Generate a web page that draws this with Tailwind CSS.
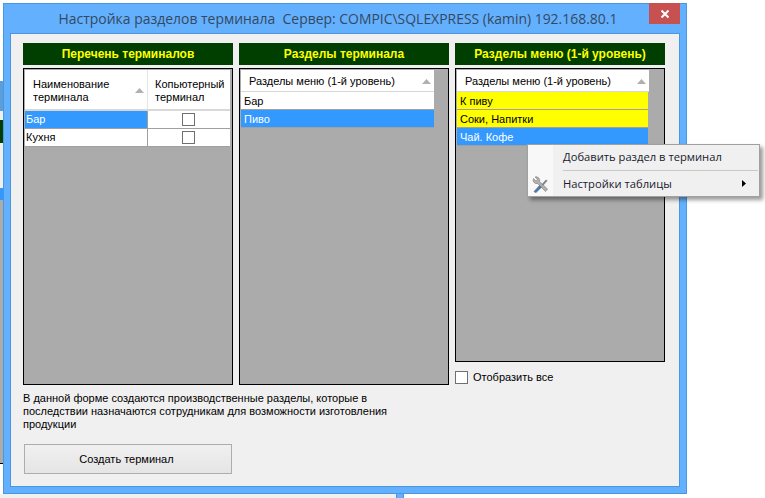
<!DOCTYPE html>
<html lang="ru">

<head>
  <meta charset="UTF-8">
  <meta name="viewport" content="width=device-width, initial-scale=1.0">
  <title>Настройка разделов терминала</title>
  <script src="https://cdn.jsdelivr.net/npm/@tailwindcss/browser@4"></script>
</head>

<body class="relative w-[765px] h-[498px] overflow-hidden bg-white font-['Liberation_Sans',sans-serif] text-[11px] leading-[13px] text-black">

  <!-- what is visible of the desktop behind the window -->
  <div class="absolute left-0 top-0 w-[3px] h-[498px] flex flex-col">
    <div class="h-[81px] bg-white"></div>
    <div class="h-[30px] bg-[#5b9fd8]"></div>
    <div class="h-[9px] bg-[#f0f0f0]"></div>
    <div class="h-[23px] bg-[#003f00]"></div>
    <div class="h-[45px] bg-[#f0f0f0]"></div>
    <div class="h-[12px] bg-[#3399ff]"></div>
    <div class="h-[263px] bg-[#ababab]"></div>
    <div class="grow bg-white border-t border-black"></div>
  </div>
  <div class="absolute left-0 top-[494px] flex h-[4px] w-[765px]">
    <div class="w-[396px] bg-[#f0f0f0]"></div>
    <div class="w-[8px] bg-[#63b0ff] border-x border-[#4a96e0]"></div>
  </div>

  <!-- window -->
  <div class="absolute left-[3px] top-[3px] w-[684px] h-[491px] flex flex-col bg-[#63b0ff] border border-[#4a96e0]">
    <div class="relative h-[29px] shrink-0 flex items-center justify-center pr-[14px] text-[13.95px] text-[#34495e] font-['Open_Sans',sans-serif] whitespace-pre">
      <span>Настройка разделов терминала  Сервер: COMPIC\SQLEXPRESS (kamin) 192.168.80.1</span>
      <div class="absolute right-[6px] top-[-1px] w-[31px] h-[21px] bg-[#c75050] flex items-center justify-center">
        <svg width="10" height="10" viewBox="0 0 10 10"><path d="M1.5 1.5 8.5 8.5M8.5 1.5 1.5 8.5" stroke="#fff" stroke-width="2" /></svg>
      </div>
    </div>

    <div class="mx-[6px] mb-[6px] grow bg-[#f0f0f0] border border-[#4a96e0] pl-[12px] pt-[9px]">
      <div class="flex gap-[6px] items-start">

        <!-- terminals -->
        <div class="w-[210px]">
          <div class="h-[22px] bg-[#003f00] flex items-center justify-center font-bold text-[12px] text-[#ffff00]">Перечень терминалов</div>
          <div class="mt-[3px] h-[317px] bg-[#ababab] border border-black pt-[1px] pl-[1px]">
            <div class="w-[205px] flex h-[41px] bg-white border-b-2 border-[#d8d8d8]">
              <div class="w-[123px] flex items-center pt-[2px] pl-[8px] pr-[3px] justify-between border-r border-[#e5e5e5]">
                <span>Наименование<br>терминала</span>
                <svg width="9" height="5" viewBox="0 0 9 5"><path d="M0 5 4.5 0 9 5Z" fill="#b0b0b0" /></svg>
              </div>
              <div class="grow flex items-center pt-[2px] pl-[7px]"><span>Копьютерный<br>терминал</span></div>
            </div>
            <div class="w-[205px] flex h-[18px] bg-white border-b border-[#a0a0a0]">
              <div class="w-[123px] bg-[#3399ff] text-white pl-[1px] flex items-center border-r border-[#a0a0a0]">Бар</div>
              <div class="grow flex items-center justify-center pr-[2px]"><div class="w-[13px] h-[13px] border border-[#707070] bg-white"></div></div>
            </div>
            <div class="w-[205px] flex h-[18px] bg-white border-b border-[#a0a0a0]">
              <div class="w-[123px] pl-[1px] flex items-center border-r border-[#a0a0a0]">Кухня</div>
              <div class="grow flex items-center justify-center pr-[2px]"><div class="w-[13px] h-[13px] border border-[#707070] bg-white"></div></div>
            </div>
          </div>
        </div>

        <!-- terminal sections -->
        <div class="w-[210px]">
          <div class="h-[22px] bg-[#003f00] flex items-center justify-center font-bold text-[12px] text-[#ffff00]">Разделы терминала</div>
          <div class="mt-[3px] h-[317px] bg-[#ababab] border border-black pt-[1px] pl-[1px]">
            <div class="w-[193px] h-[22px] bg-white border-b border-[#d8d8d8] flex items-center justify-between pl-[8px] pr-[3px] pt-[1px]">
              <span>Разделы меню (1-й уровень)</span>
              <svg width="9" height="5" viewBox="0 0 9 5"><path d="M0 5 4.5 0 9 5Z" fill="#b0b0b0" /></svg>
            </div>
            <div class="w-[193px] h-[18px] bg-white border-b border-[#a0a0a0] flex items-center pl-[3px] pt-[1px]">Бар</div>
            <div class="w-[193px] h-[18px] bg-[#3399ff] text-white border-b border-[#a0a0a0] flex items-center pl-[3px] pt-[1px]">Пиво</div>
          </div>
        </div>

        <!-- menu sections -->
        <div class="w-[210px]">
          <div class="h-[22px] bg-[#003f00] flex items-center justify-center font-bold text-[12px] text-[#ffff00]">Разделы меню (1-й уровень)</div>
          <div class="mt-[3px] h-[294px] bg-[#ababab] border border-black pt-[1px] pl-[1px]">
            <div class="w-[192px] h-[22px] bg-white border-b border-[#d8d8d8] flex items-center justify-between pl-[8px] pr-[3px] pt-[1px]">
              <span>Разделы меню (1-й уровень)</span>
              <svg width="9" height="5" viewBox="0 0 9 5"><path d="M0 5 4.5 0 9 5Z" fill="#b0b0b0" /></svg>
            </div>
            <div class="w-[191px] h-[18px] bg-[#ffff00] border-b border-[#a0a0a0] flex items-center pl-[3px] pt-[1px]">К пиву</div>
            <div class="w-[191px] h-[18px] bg-[#ffff00] border-b border-[#a0a0a0] flex items-center pl-[3px] pt-[1px]">Соки, Напитки</div>
            <div class="w-[191px] h-[18px] bg-[#3399ff] text-white border-b border-[#a0a0a0] flex items-center pl-[3px] pt-[1px]">Чай. Кофе</div>
          </div>
          <label class="mt-[8px] flex items-center gap-[5px]">
            <span class="w-[13px] h-[13px] border border-[#707070] bg-white"></span>
            <span class="pt-[1px]">Отобразить все</span>
          </label>
        </div>
      </div>

      <p class="mt-[7px] w-[400px]">В данной форме создаются производственные разделы, которые в последствии назначаются сотрудникам для возможности изготовления продукции</p>

      <button class="mt-[13px] ml-[1px] block w-[208px] h-[30px] pr-[3px] border border-[#adadad] bg-gradient-to-b from-[#f0f0f0] to-[#e5e5e5]">Создать терминал</button>
    </div>
  </div>

  <!-- context menu -->
  <div class="absolute left-[527px] top-[144px] w-[233px] h-[53px] bg-[#f0f0f0] border border-[#a0a0a0] shadow-[3px_3px_4px_rgba(0,0,0,0.4)] flex">
    <div class="w-[25px] bg-[#f8f8f8] flex items-end justify-center pb-[3px]">
      <!-- crossed spanner and screwdriver -->
      <svg width="17" height="17" viewBox="0 0 17 17">
        <path d="M1.5 2.5 4 5l1.5-1.5L3 1a3.5 3.5 0 0 1 4.5 4.5l8 7.5-2 2.5-8-8A3.5 3.5 0 0 1 1.5 2.5Z" fill="#b0b0b0" stroke="#7c7c7c" stroke-width=".6" />
        <path d="M2 15.5 7.5 9.5l2 1.8L3.8 16.8Z" fill="#4f77a8" stroke="#3d5f8a" stroke-width=".5" />
        <path d="M9.5 8.5 14 3.5l1.5 1.2-4.5 5Z" fill="#7b8794" />
      </svg>
    </div>
    <div class="grow pl-[10px] pr-[1px] text-[11.2px] text-[#1a1a2e] font-['Open_Sans',sans-serif]">
      <div class="h-[25px] pb-[3px] flex items-center">Добавить раздел в терминал</div>
      <div class="h-px bg-[#c8c8c8]"></div>
      <div class="h-[26px] pb-[2px] flex items-center justify-between pr-[12px]">
        <span>Настройки таблицы</span>
        <svg width="4" height="7" viewBox="0 0 4 7"><path d="M0 0 4 3.5 0 7Z" fill="#000" /></svg>
      </div>
    </div>
  </div>

</body>

</html>
